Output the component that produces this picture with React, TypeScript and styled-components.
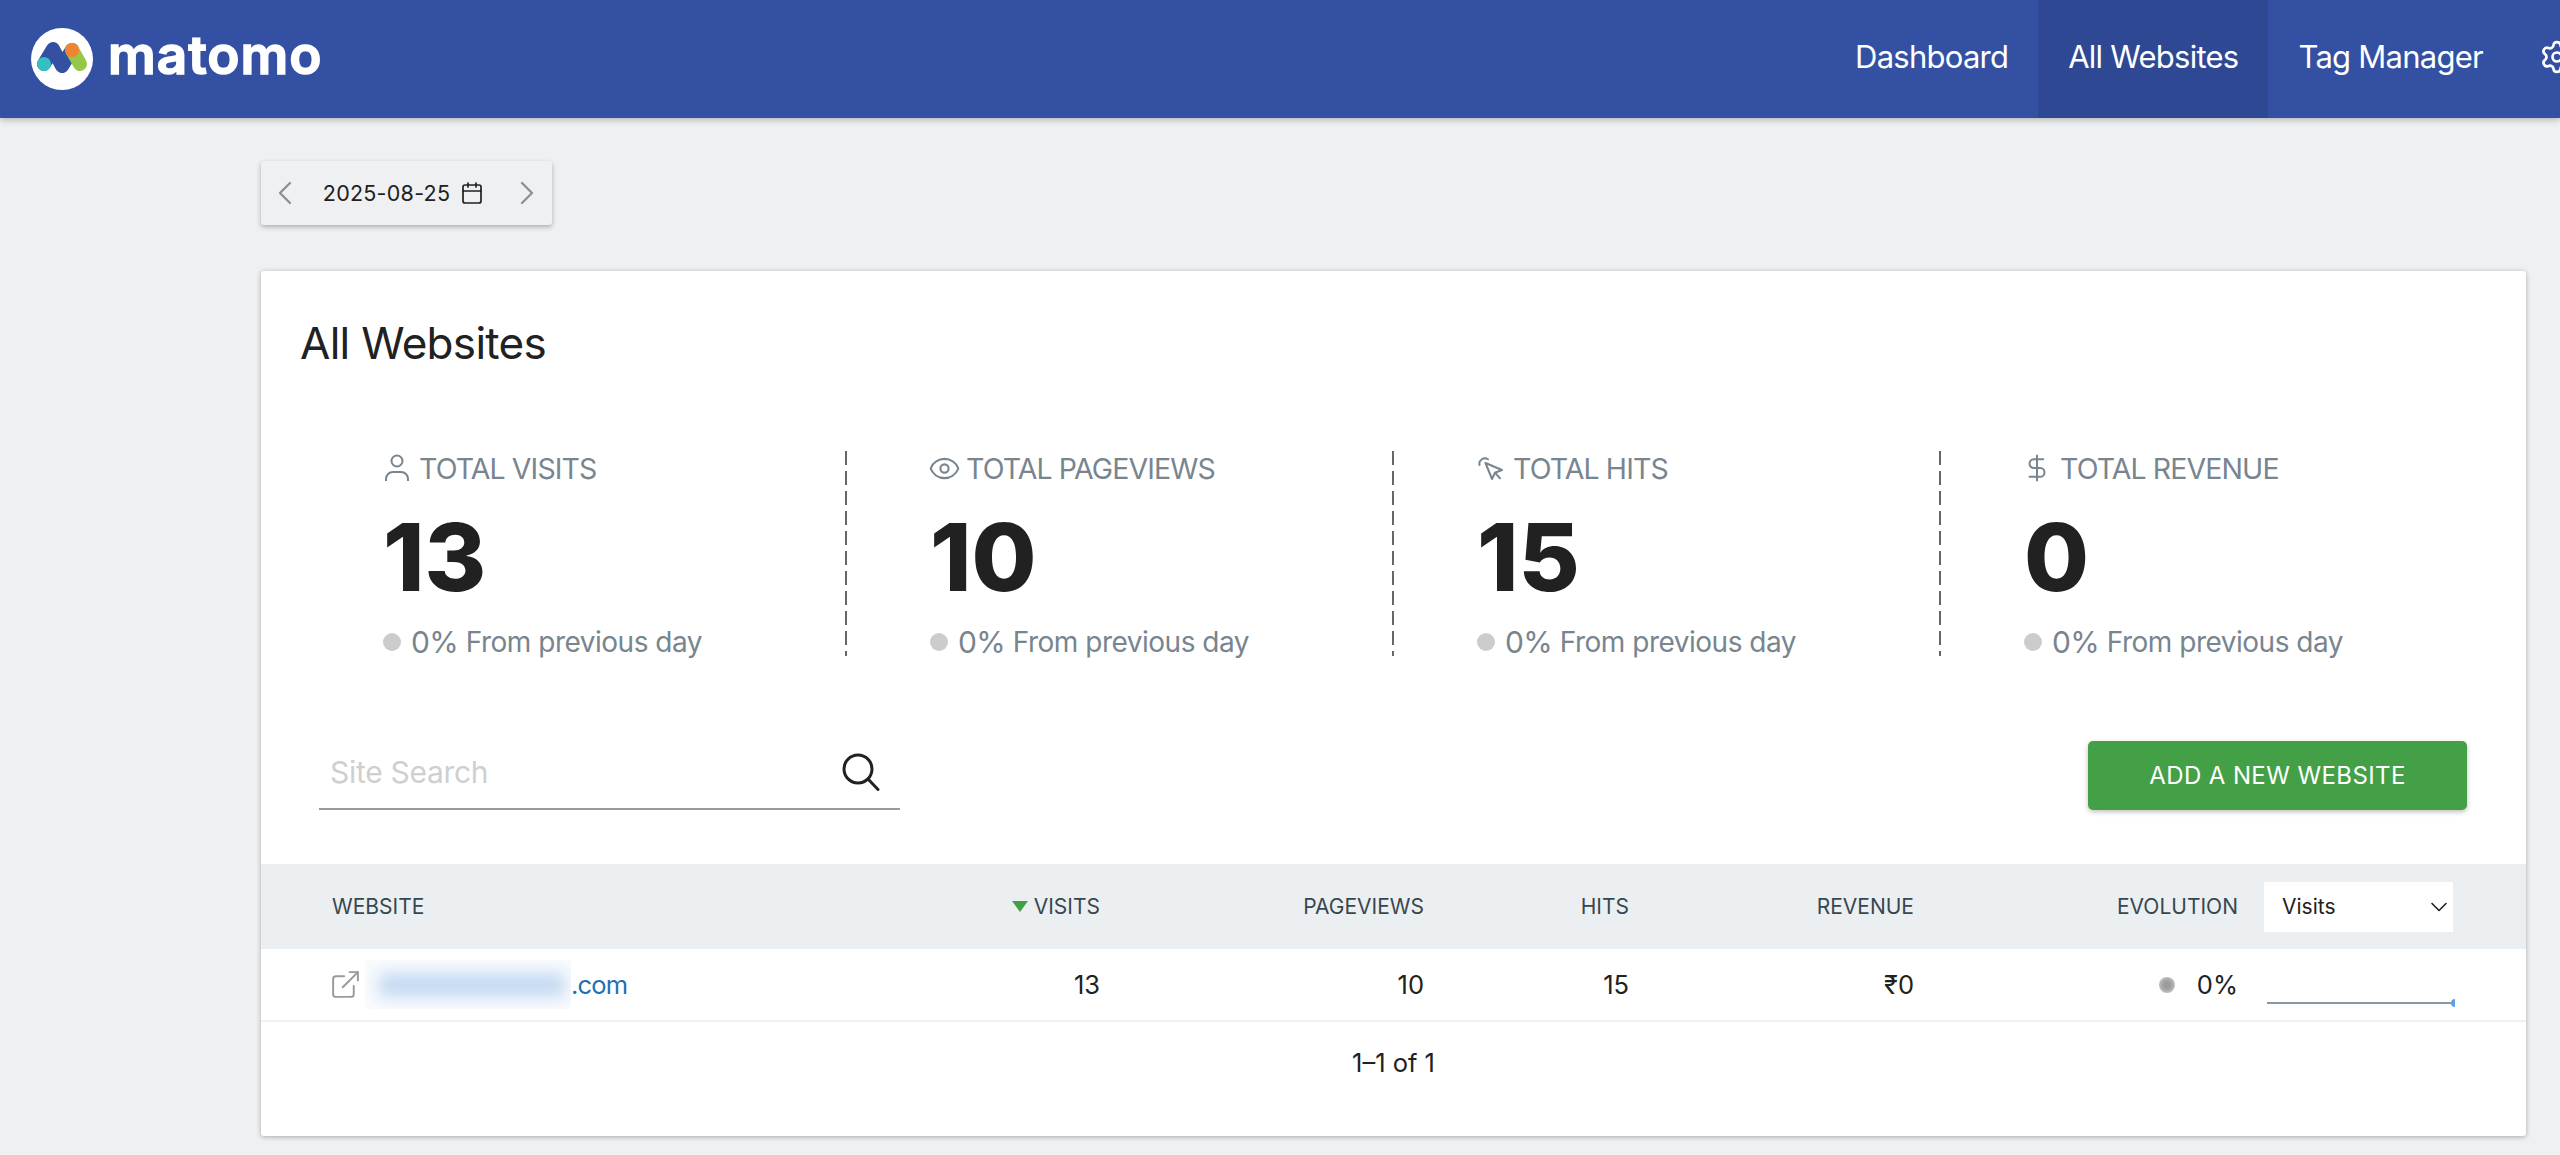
import React from 'react';
import styled, { createGlobalStyle } from 'styled-components';
import { Calendar, ChevronDown, ChevronLeft, ChevronRight, DollarSign, ExternalLink, Eye, Settings } from 'lucide-react';

const GlobalStyle = createGlobalStyle`
  html, body {
    margin: 0;
    padding: 0;
    background: #eff0f2;
    overflow: hidden;
  }
  body {
    font-family: Inter, "Liberation Sans", sans-serif;
    color: #212121;
  }
`;

const Page = styled.div`
  width: 2560px;
  height: 1155px;
  overflow: hidden;
`;

const NavBar = styled.header`
  display: flex;
  align-items: stretch;
  justify-content: space-between;
  height: 118px;
  padding-left: 31px;
  background: #3450a3;
  box-shadow: 0 2px 6px rgba(0, 0, 0, 0.25);
`;

const Logo = styled.div`
  display: flex;
  align-items: center;
  gap: 15px;
`;

const LogoBadge = styled.svg`
  width: 62px;
  height: 62px;
`;

const LogoText = styled.span`
  color: #fff;
  font-family: Inter, sans-serif;
  font-size: 53px;
  font-weight: 600;
  letter-spacing: 1px;
  line-height: 1;
  margin-top: -8px;
  -webkit-text-stroke: 1.5px #fff;
`;

const NavLinks = styled.nav`
  display: flex;
  align-items: stretch;
  margin-right: -44px;
`;

const NavLink = styled.a<{ $active?: boolean }>`
  display: flex;
  align-items: center;
  padding: 0 30px 5px 30px;
  color: #fff;
  font-size: 31px;
  font-weight: 400;
  letter-spacing: -0.75px;
  background: ${props => (props.$active ? '#2e4893' : 'transparent')};
`;

const GearLink = styled(NavLink)`
  padding-left: 26px;
  padding-right: 29px;
`;

const Main = styled.main`
  padding: 43px 34px 0 261px;
`;

const DatePicker = styled.div`
  display: flex;
  align-items: center;
  width: 291px;
  height: 64px;
  padding: 0 5px 0 4px;
  box-sizing: border-box;
  background: #eff0f2;
  border-radius: 3px;
  box-shadow: 0 2px 5px rgba(0, 0, 0, 0.28);
  color: #8f8f8f;
`;

const DateText = styled.span`
  flex: 1;
  display: flex;
  align-items: center;
  justify-content: center;
  gap: 10px;
  padding-right: 5px;
  color: #212121;
  font-size: 21.5px;
  letter-spacing: 0.25px;
`;

const Card = styled.section`
  margin-top: 46px;
  height: 865px;
  background: #fff;
  border-radius: 3px;
  box-shadow: 0 1px 5px rgba(0, 0, 0, 0.3);
`;

const Title = styled.h1`
  margin: 0;
  padding: 44px 0 0 39px;
  font-size: 44px;
  font-weight: 400;
  letter-spacing: -0.7px;
  line-height: 56px;
`;

const Stats = styled.div`
  display: grid;
  grid-template-columns: repeat(4, 547px);
  margin: 80px 0 0 39px;
`;

const Stat = styled.div`
  height: 205px;
  padding-left: 83px;
  box-sizing: border-box;
  background: repeating-linear-gradient(to bottom, #666 0 14px, transparent 14px 20px) right top / 2px 100% no-repeat;
  &:last-child {
    background: none;
  }
`;

const StatLabel = styled.div`
  display: flex;
  align-items: center;
  height: 34px;
  color: #78858f;
  font-size: 28.5px;
  letter-spacing: -0.9px;
`;

const IconSlot = styled.span`
  display: flex;
  align-items: center;
  width: 36px;
  height: 34px;
  color: #78858f;
`;

const PersonIcon = styled.svg`
  width: 26px;
  height: 28px;
  margin-left: 1px;
`;

const HitsIcon = styled.svg`
  width: 26px;
  height: 24px;
  margin-left: 1px;
`;

const EyeIcon = styled(Eye)`
  flex: none;
  margin-left: -2px;
`;

const DollarIcon = styled(DollarSign)`
  flex: none;
  margin-left: -2px;
`;

const StatValue = styled.div`
  margin-top: 28px;
  color: #212121;
  font-size: 94px;
  font-weight: 800;
  line-height: 88px;
`;

const StatChange = styled.div`
  display: flex;
  align-items: center;
  margin-top: 23px;
  color: #78858f;
  font-size: 28px;
  letter-spacing: -0.5px;
`;

const GreyDot = styled.span`
  width: 18px;
  height: 18px;
  margin-right: 10px;
  border-radius: 50%;
  background: #cccccc;
`;

const Percent = styled.span`
  font-size: 30px;
  letter-spacing: -0.8px;
  margin-right: 8px;
`;

const Controls = styled.div`
  display: flex;
  align-items: flex-start;
  justify-content: space-between;
  margin: 87px 59px 0 58px;
`;

const SearchBox = styled.div`
  display: flex;
  align-items: center;
  justify-content: space-between;
  width: 581px;
  height: 67px;
  padding: 0 20px 7px 11px;
  box-sizing: border-box;
  border-bottom: 2px solid #9a9a9a;
`;

const SearchPlaceholder = styled.span`
  color: #cfcfcf;
  font-size: 30px;
  letter-spacing: -0.3px;
`;

const SearchIcon = styled.svg`
  width: 38px;
  height: 38px;
`;

const AddButton = styled.button`
  width: 379px;
  height: 69px;
  margin-top: -2px;
  border: none;
  border-radius: 5px;
  background: #43a047;
  box-shadow: 0 2px 5px rgba(0, 0, 0, 0.25);
  color: #fff;
  font-family: inherit;
  font-size: 24px;
  font-weight: 400;
  letter-spacing: 0.4px;
`;

const Grid = styled.div`
  display: grid;
  grid-template-columns: 495px 344px 324px 205px 285px 324px 189px;
`;

const Head = styled(Grid)`
  margin-top: 54px;
  height: 85px;
  align-items: center;
  background: #eceff1;
  color: #37474f;
  font-size: 21px;
`;

const Row = styled(Grid)`
  height: 71px;
  align-items: center;
  border-bottom: 2px solid #f0f0f0;
  font-size: 25.5px;
`;

const Cell = styled.div<{ $right?: boolean }>`
  display: flex;
  align-items: center;
  justify-content: ${props => (props.$right ? 'flex-end' : 'flex-start')};
`;

const FirstCell = styled(Cell)`
  padding-left: 71px;
`;

const SortArrow = styled.span`
  width: 0;
  height: 0;
  margin-right: 6px;
  border-left: 8px solid transparent;
  border-right: 8px solid transparent;
  border-top: 11px solid #43a047;
`;

const MetricSelect = styled.div`
  display: flex;
  align-items: center;
  justify-content: space-between;
  width: 189px;
  height: 50px;
  margin-left: 26px;
  padding: 0 0 0 18px;
  box-sizing: border-box;
  background: #fff;
  color: #212121;
  font-size: 21px;
`;

const SelectChevron = styled(ChevronDown)`
  flex: none;
`;

const SiteLink = styled.a`
  display: flex;
  align-items: center;
  color: #1f6fb5;
  letter-spacing: -0.8px;
`;

const LinkIcon = styled(ExternalLink)`
  flex: none;
  margin-left: -3px;
`;

const BlurBox = styled.span`
  display: block;
  width: 206px;
  height: 49px;
  margin-left: 3px;
  overflow: hidden;
  background: #f9fbfe;
`;

const BlurInk = styled.span`
  display: block;
  width: 186px;
  height: 24px;
  margin: 13px 0 0 14px;
  background: #c3d9f2;
  filter: blur(8px);
`;

const TrendDot = styled.span`
  width: 16px;
  height: 16px;
  margin-right: 22px;
  border-radius: 50%;
  background: radial-gradient(circle, #9c9c9c 30%, #d8d8d8 100%);
`;

const Spark = styled.svg`
  display: block;
  width: 188px;
  height: 12px;
  margin: 36px 0 0 29px;
`;

const Pagination = styled.div`
  margin-top: 25px;
  text-align: center;
  font-size: 25.5px;
`;

const stats = [
  {
    label: 'Total Visits',
    value: '13',
    icon: (
      <PersonIcon viewBox="0 0 26 28" fill="none" stroke="currentColor" strokeWidth="2">
        <circle cx="13" cy="7" r="5.5" />
        <path d="M2 27v-2a7 7 0 0 1 7-7h8a7 7 0 0 1 7 7v2" />
      </PersonIcon>
    ),
  },
  { label: 'Total Pageviews', value: '10', icon: <EyeIcon size={33} strokeWidth={1.5} /> },
  {
    label: 'Total Hits',
    value: '15',
    icon: (
      <HitsIcon viewBox="0 0 26 24" fill="none" stroke="currentColor" strokeWidth="2" strokeLinejoin="round" strokeLinecap="round">
        <path d="M1.5 9A5.5 5.5 0 0 1 10 3.3" />
        <path d="M7.5 7L24 14l-7 2.7L14 23z" />
        <path d="M17 16.7l5 5.6" />
      </HitsIcon>
    ),
  },
  { label: 'Total Revenue', value: '0', icon: <DollarIcon size={30} strokeWidth={1.6} /> },
];

const App = () => {
  return (
    <Page>
      <GlobalStyle />
      <NavBar>
        <Logo>
          <LogoBadge viewBox="0 0 62 62">
            <circle cx="31" cy="31" r="31" fill="#fff" />
            <path d="M13 36 L22 21 L31 38 L41 22" fill="none" stroke="#3450a3" strokeWidth="14" strokeLinecap="round" strokeLinejoin="round" />
            <path d="M41 22 L49 36" fill="none" stroke="#95c748" strokeWidth="14" strokeLinecap="round" />
            <circle cx="13" cy="36" r="7" fill="#35bfc0" />
            <circle cx="41" cy="22" r="7" fill="#f38334" />
          </LogoBadge>
          <LogoText>matomo</LogoText>
        </Logo>
        <NavLinks>
          <NavLink>Dashboard</NavLink>
          <NavLink $active>All Websites</NavLink>
          <NavLink>Tag Manager</NavLink>
          <GearLink><Settings size={36} strokeWidth={1.8} /></GearLink>
        </NavLinks>
      </NavBar>
      <Main>
        <DatePicker>
          <ChevronLeft size={40} strokeWidth={1.4} />
          <DateText>2025-08-25 <Calendar size={24} color="#212121" strokeWidth={1.7} /></DateText>
          <ChevronRight size={40} strokeWidth={1.4} />
        </DatePicker>
        <Card>
          <Title>All Websites</Title>
          <Stats>
            {stats.map(stat => (
              <Stat key={stat.label}>
                <StatLabel><IconSlot>{stat.icon}</IconSlot>{stat.label.toUpperCase()}</StatLabel>
                <StatValue>{stat.value}</StatValue>
                <StatChange>
                  <GreyDot />
                  <Percent>0%</Percent>
                  From previous day
                </StatChange>
              </Stat>
            ))}
          </Stats>
          <Controls>
            <SearchBox>
              <SearchPlaceholder>Site Search</SearchPlaceholder>
              <SearchIcon viewBox="0 0 38 38" fill="none" stroke="#212121" strokeWidth="3" strokeLinecap="round">
                <circle cx="16" cy="16" r="14" />
                <path d="M26.5 26.5L36 36.5" />
              </SearchIcon>
            </SearchBox>
            <AddButton>ADD A NEW WEBSITE</AddButton>
          </Controls>
          <Head>
            <FirstCell>WEBSITE</FirstCell>
            <Cell $right><SortArrow />VISITS</Cell>
            <Cell $right>PAGEVIEWS</Cell>
            <Cell $right>HITS</Cell>
            <Cell $right>REVENUE</Cell>
            <Cell $right>EVOLUTION</Cell>
            <MetricSelect>Visits <SelectChevron size={28} strokeWidth={1.4} /></MetricSelect>
          </Head>
          <Row>
            <FirstCell>
              <SiteLink>
                <LinkIcon size={33} strokeWidth={1.4} color="#9a9a9a" />
                <BlurBox><BlurInk /></BlurBox>
                .com
              </SiteLink>
            </FirstCell>
            <Cell $right>13</Cell>
            <Cell $right>10</Cell>
            <Cell $right>15</Cell>
            <Cell $right>₹0</Cell>
            <Cell $right><TrendDot />0%</Cell>
            <Spark viewBox="0 0 188 12">
              <line x1="0" y1="6" x2="188" y2="6" stroke="#8a96a3" strokeWidth="2" />
              <circle cx="188" cy="6" r="4" fill="#5aa2e8" />
            </Spark>
          </Row>
          <Pagination>1–1 of 1</Pagination>
        </Card>
      </Main>
    </Page>
  );
};

export default App;
